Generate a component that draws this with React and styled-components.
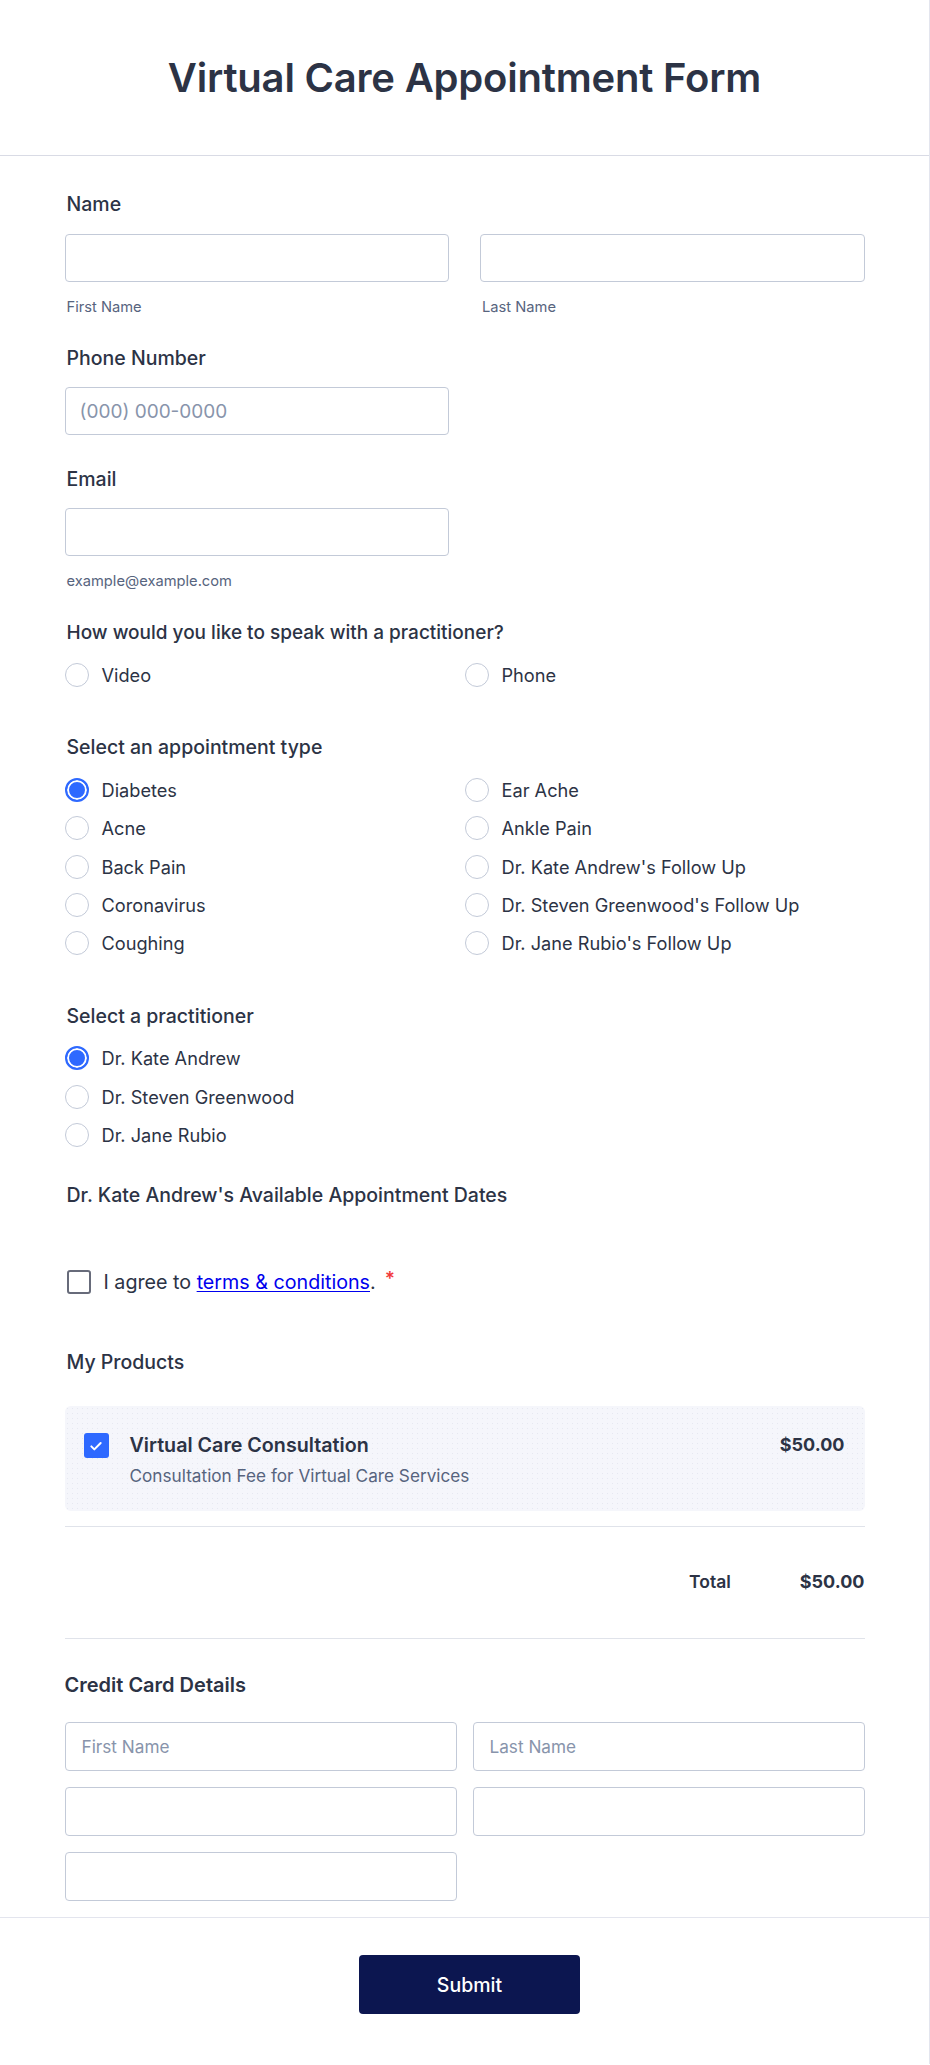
import React from "react";
import styled, { createGlobalStyle } from "styled-components";

const Global = createGlobalStyle`
  html, body { margin: 0; padding: 0; background: #fff; overflow-x: hidden; }
  body { font-family: Inter, "Noto Sans", "Liberation Sans", sans-serif; color: #2c3345; }
  * { box-sizing: border-box; }
`;

const Card = styled.div`
  width: 930px;
  border-right: 1px solid #e3e5ee;
  background: #fff;
`;

const Header = styled.header`
  height: 156px;
  border-bottom: 1px solid #d9dbe5;
  display: flex;
  align-items: center;
  justify-content: center;
`;

const Title = styled.h1`
  margin: 0;
  font-size: 40px;
  font-weight: 600;
  line-height: 48px;
  color: #2c3345;
  letter-spacing: -0.2px;
`;

const Body = styled.div`
  width: 800px;
  margin: 0 auto;
`;

const Field = styled.div`
  padding-top: ${(p) => p.$top}px;
`;

const Label = styled.div`
  font-size: ${(p) => p.$fs ?? 19.5}px;
  line-height: 24px;
  font-weight: ${(p) => (p.$bold ? 600 : 500)};
  color: #2c3345;
  margin-bottom: ${(p) => p.$mb ?? 17}px;
  padding-left: ${(p) => (p.$flush ? 0 : 2)}px;
  white-space: nowrap;
`;

const TwoCol = styled.div`
  display: grid;
  grid-template-columns: 1fr 1fr;
  column-gap: ${(p) => p.$gap}px;
  row-gap: ${(p) => p.$rowGap ?? 0}px;
`;

const HalfWrap = styled.div`
  width: 384px;
`;

const Input = styled.input`
  display: block;
  width: 100%;
  height: ${(p) => p.$h ?? 48}px;
  border: 1px solid #c3cad8;
  border-radius: 4px;
  background: #fff;
  padding: 0 ${(p) => p.$pad ?? 14}px;
  font-family: inherit;
  font-size: ${(p) => p.$fs ?? 19}px;
  color: #2c3345;
  outline: none;
  &::placeholder { color: #8894ab; }
`;

const SubLabel = styled.div`
  margin-top: 17px;
  padding-left: 2px;
  font-size: 14.7px;
  line-height: 16px;
  color: #57647e;
`;

const Options = styled.div`
  display: grid;
  grid-template-columns: ${(p) => (p.$cols === 1 ? "1fr" : "1fr 1fr")};
  row-gap: ${(p) => p.$gap}px;
`;

const Option = styled.label`
  display: flex;
  align-items: center;
  gap: 13px;
  height: 24px;
  font-size: 18.2px;
  color: #2c3345;
  white-space: nowrap;
`;

const Radio = styled.span`
  flex: none;
  width: 24px;
  height: 24px;
  border-radius: 50%;
  border: ${(p) => (p.$checked ? "2px solid #2e69ff" : "1px solid #c3cad8")};
  background: ${(p) => (p.$checked ? "#2e69ff" : "#fff")};
  box-shadow: ${(p) => (p.$checked ? "inset 0 0 0 2px #fff" : "none")};
`;

const AgreeRow = styled.div`
  display: flex;
  align-items: center;
  gap: 13px;
  padding-left: 2px;
  height: 24px;
  font-size: 19.7px;
  color: #2c3345;
  white-space: nowrap;
`;

const Box = styled.span`
  flex: none;
  width: 24px;
  height: 24px;
  border: 2px solid #676b7a;
  border-radius: 3px;
  background: #fff;
`;

const Link = styled.a`
  color: #0000ee;
  text-decoration: underline;
  text-underline-offset: 2px;
`;

const Star = styled.span`
  color: #f23a3c;
  margin-left: 9px;
  position: relative;
  top: -4px;
  font-size: 19px;
  font-weight: 600;
`;

const Product = styled.div`
  display: flex;
  align-items: flex-start;
  gap: 21px;
  padding: 27px 20px 25px 19px;
  border-radius: 6px;
  background-color: #f5f6fb;
  background-image: radial-gradient(#e6e8f1 0.7px, transparent 0.9px);
  background-size: 5px 5px;
`;

const BlueCheck = styled.span`
  flex: none;
  width: 25px;
  height: 25px;
  border-radius: 3px;
  background: #2e69ff;
  display: flex;
  align-items: center;
  justify-content: center;
`;

const ProdInfo = styled.div`
  flex: 1;
`;

const ProdTitle = styled.div`
  font-size: 19.7px;
  line-height: 24px;
  font-weight: 600;
  color: #2c3345;
`;

const ProdDesc = styled.div`
  margin-top: 9px;
  font-size: 17.2px;
  line-height: 20px;
  color: #57647e;
`;

const Price = styled.div`
  font-size: 18px;
  line-height: 24px;
  font-weight: 700;
  color: #2c3345;
`;

const Divider = styled.hr`
  margin: ${(p) => p.$mt}px 0 0;
  border: 0;
  border-top: 1px solid #e0e3ea;
  height: 0;
`;

const TotalRow = styled.div`
  display: flex;
  justify-content: flex-end;
  align-items: center;
  gap: 69px;
  padding: 45px 0 46px;
  line-height: 20px;
  color: #2c3345;
`;

const TotalLabel = styled.span`
  font-size: 17.5px;
  font-weight: 600;
`;

const TotalValue = styled.span`
  font-size: 18px;
  font-weight: 700;
`;

const CCSection = styled.div`
  padding: 34px 0 16px;
`;

const Footer = styled.footer`
  border-top: 1px solid #e3e5ee;
  padding: 37px 0 50px 10px;
  display: flex;
  justify-content: center;
`;

const Submit = styled.button`
  width: 221px;
  height: 59px;
  border: 0;
  border-radius: 4px;
  background: #0c1650;
  color: #fff;
  font-family: inherit;
  font-size: 19.5px;
  font-weight: 500;
`;

const appointmentTypes = [
  ["Diabetes", true],
  ["Ear Ache", false],
  ["Acne", false],
  ["Ankle Pain", false],
  ["Back Pain", false],
  ["Dr. Kate Andrew's Follow Up", false],
  ["Coronavirus", false],
  ["Dr. Steven Greenwood's Follow Up", false],
  ["Coughing", false],
  ["Dr. Jane Rubio's Follow Up", false],
];

const practitioners = [
  ["Dr. Kate Andrew", true],
  ["Dr. Steven Greenwood", false],
  ["Dr. Jane Rubio", false],
];

const Opt = ({ label, checked }) => (
  <Option>
    <Radio $checked={checked} />
    {label}
  </Option>
);

export default function App() {
  return (
    <>
      <Global />
      <Card>
        <Header>
          <Title>Virtual Care Appointment Form</Title>
        </Header>
        <Body>
          <Field $top={36}>
            <Label $mb={18}>Name</Label>
            <TwoCol $gap={31}>
              <div>
                <Input />
                <SubLabel>First Name</SubLabel>
              </div>
              <div>
                <Input />
                <SubLabel>Last Name</SubLabel>
              </div>
            </TwoCol>
          </Field>

          <Field $top={31}>
            <Label>Phone Number</Label>
            <HalfWrap>
              <Input placeholder="(000) 000-0000" />
            </HalfWrap>
          </Field>

          <Field $top={32}>
            <Label>Email</Label>
            <HalfWrap>
              <Input />
              <SubLabel>example@example.com</SubLabel>
            </HalfWrap>
          </Field>

          <Field $top={32}>
            <Label $mb={18} $fs={19}>How would you like to speak with a practitioner?</Label>
            <Options $gap={0}>
              <Opt label="Video" />
              <Opt label="Phone" />
            </Options>
          </Field>

          <Field $top={48}>
            <Label $mb={19}>Select an appointment type</Label>
            <Options $gap={14.33}>
              {appointmentTypes.map(([l, c]) => (
                <Opt key={l} label={l} checked={c} />
              ))}
            </Options>
          </Field>

          <Field $top={49}>
            <Label $mb={18}>Select a practitioner</Label>
            <Options $cols={1} $gap={14.5}>
              {practitioners.map(([l, c]) => (
                <Opt key={l} label={l} checked={c} />
              ))}
            </Options>
          </Field>

          <Field $top={36}>
            <Label $mb={0}>Dr. Kate Andrew's Available Appointment Dates</Label>
          </Field>

          <Field $top={63}>
            <AgreeRow>
              <Box />
              <span>
                I agree to <Link href="#">terms &amp; conditions</Link>.
                <Star>*</Star>
              </span>
            </AgreeRow>
          </Field>

          <Field $top={56}>
            <Label $mb={32}>My Products</Label>
            <Product>
              <BlueCheck>
                <svg width="16" height="16" viewBox="0 0 24 24" fill="none">
                  <path d="M5 12.5l4.5 4.5L19 7.5" stroke="#fff" strokeWidth="3" strokeLinecap="round" strokeLinejoin="round" />
                </svg>
              </BlueCheck>
              <ProdInfo>
                <ProdTitle>Virtual Care Consultation</ProdTitle>
                <ProdDesc>Consultation Fee for Virtual Care Services</ProdDesc>
              </ProdInfo>
              <Price>$50.00</Price>
            </Product>
            <Divider $mt={15} />
            <TotalRow>
              <TotalLabel>Total</TotalLabel>
              <TotalValue>$50.00</TotalValue>
            </TotalRow>
            <Divider $mt={0} />
          </Field>

          <CCSection>
            <Label $bold $flush $mb={25} $fs={20}>Credit Card Details</Label>
            <TwoCol $gap={16} $rowGap={16}>
              <Input $h={49} $pad={16} $fs={17.2} placeholder="First Name" />
              <Input $h={49} $pad={16} $fs={17.2} placeholder="Last Name" />
              <Input $h={49} $pad={16} $fs={17.2} />
              <Input $h={49} $pad={16} $fs={17.2} />
              <Input $h={49} $pad={16} $fs={17.2} />
            </TwoCol>
          </CCSection>
        </Body>
        <Footer>
          <Submit type="button">Submit</Submit>
        </Footer>
      </Card>
    </>
  );
}
